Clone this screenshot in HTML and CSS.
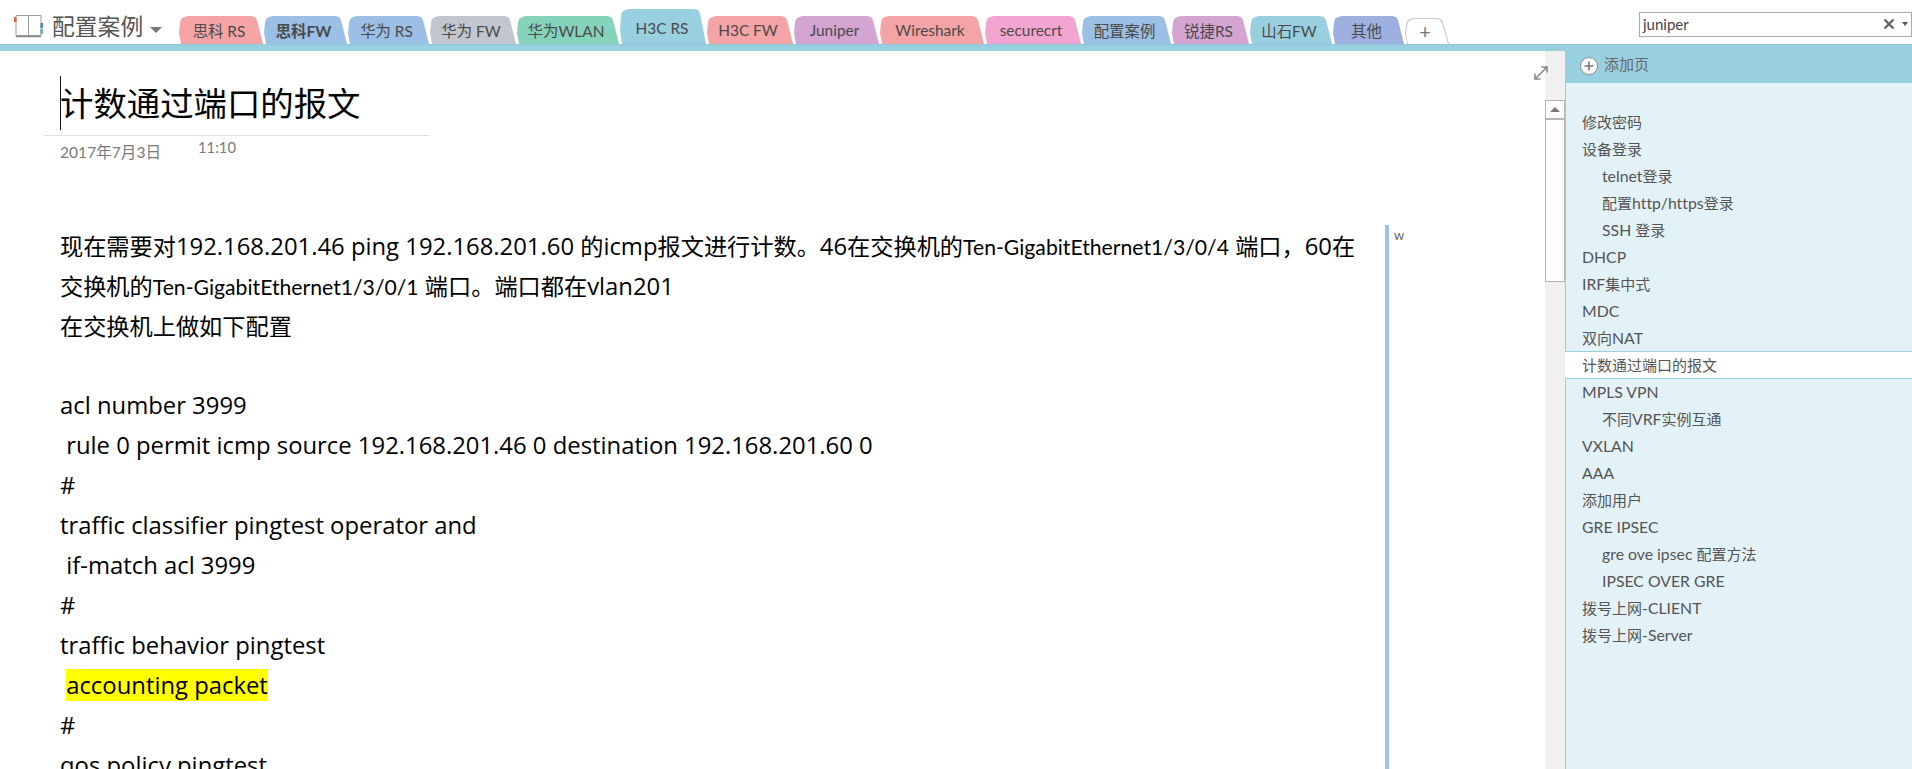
FILE: index.html
```html
<!DOCTYPE html>
<html lang="zh-CN">
<head>
<meta charset="utf-8">
<title>计数通过端口的报文</title>
<link rel="stylesheet" href="styles.css">
</head>
<body>
<header class="topbar">
  <div class="brand">
    <svg class="book" width="30" height="24" viewBox="0 0 30 24">
      <path d="M2 1.5h12.5v20H2zM14.5 1.5H27v20H14.5z" fill="#fff" stroke="#9a9a9a" stroke-width="1"/>
      <path d="M2 22.5h25" stroke="#8a8a8a" stroke-width="1.5"/>
      <rect x="0" y="3" width="2.5" height="5" fill="#e2603a"/>
      <rect x="26.5" y="9" width="2.5" height="5" fill="#4a86c5"/>
      <rect x="26.5" y="15" width="2.5" height="5" fill="#6fae9a"/>
    </svg>
    <span class="brand-name">配置案例</span>
    <span class="brand-caret"></span>
  </div>
  <nav class="tabs">
    <div class="tab c-red w85">思科 RS</div>
    <div class="tab c-blue w84 strong">思科FW</div>
    <div class="tab c-blue w82">华为 RS</div>
    <div class="tab c-grey w87">华为 FW</div>
    <div class="tab c-green w103">华为WLAN</div>
    <div class="tab c-teal w87 active">H3C RS</div>
    <div class="tab c-red w87">H3C FW</div>
    <div class="tab c-purple w86">Juniper</div>
    <div class="tab c-red w105">Wireshark</div>
    <div class="tab c-pink w97">securecrt</div>
    <div class="tab c-blue w90">配置案例</div>
    <div class="tab c-purple w78">锐捷RS</div>
    <div class="tab c-teal w83">山石FW</div>
    <div class="tab c-indigo w72">其他</div>
    <div class="tab add w45"><span class="add-label">+</span></div>
  </nav>
  <div class="search">
    <span class="search-text">juniper</span>
    <svg class="search-x" width="12" height="12" viewBox="0 0 12 12"><path d="M1.5 1.5l9 9M10.5 1.5l-9 9" stroke="#666" stroke-width="2.4"/></svg>
    <span class="search-caret"></span>
  </div>
</header>
<div class="band"></div>
<div class="workspace">
  <main class="page">
    <span class="caret"></span>
    <svg class="expand" width="16" height="16" viewBox="0 0 16 16"><path d="M2.5 13.5L13.5 2.5M8.5 2h5.5v5.5M2 8.5V14h5.5" fill="none" stroke="#858585" stroke-width="1.5"/></svg>
    <div class="title-block">
      <h1 class="title">计数通过端口的报文</h1>
    </div>
    <div class="meta">
      <span class="date">2017年7月3日</span>
      <span class="time">11:10</span>
    </div>
    <div class="note-row">
      <div class="note">
        <div class="line"><span class="c">现在需要对</span>192.168.201.46 ping 192.168.201.60 <span class="c">的</span>icmp<span class="c">报文进行计数。</span>46<span class="c">在交换机的</span><span class="s">Ten-GigabitEthernet1/3/0/4</span> <span class="c">端口，</span>60<span class="c">在</span></div>
        <div class="line"><span class="c">交换机的</span><span class="s">Ten-GigabitEthernet1/3/0/1</span> <span class="c">端口。端口都在</span>vlan201</div>
        <div class="line"><span class="c">在交换机上做如下配置</span></div>
        <div class="line"></div>
        <div class="line">acl number 3999</div>
        <div class="line"> rule 0 permit icmp source 192.168.201.46 0 destination 192.168.201.60 0</div>
        <div class="line">#</div>
        <div class="line">traffic classifier pingtest operator and</div>
        <div class="line"> if-match acl 3999</div>
        <div class="line">#</div>
        <div class="line">traffic behavior pingtest</div>
        <div class="line"> <span class="mark">accounting packet</span></div>
        <div class="line">#</div>
        <div class="line">qos policy pingtest</div>
      </div>
      <aside class="side-note">w</aside>
    </div>
  </main>
  <div class="scrollbar">
    <div class="scroll-btn"><span class="scroll-up"></span></div>
    <div class="scroll-thumb"></div>
  </div>
  <aside class="panel">
    <div class="panel-head">
      <svg class="plus" width="20" height="20" viewBox="0 0 20 20"><circle cx="10" cy="10" r="8.5" fill="#fff" stroke="#8f8f8f" stroke-width="1"/><path d="M10 5.5v9M5.5 10h9" stroke="#777" stroke-width="1.6"/></svg>
      <span>添加页</span>
    </div>
    <ul class="pages">
      <li><span class="c">修改密码</span></li>
      <li><span class="c">设备登录</span></li>
      <li class="sub">telnet<span class="c">登录</span></li>
      <li class="sub"><span class="c">配置</span>http/https<span class="c">登录</span></li>
      <li class="sub">SSH <span class="c">登录</span></li>
      <li>DHCP</li>
      <li>IRF<span class="c">集中式</span></li>
      <li>MDC</li>
      <li><span class="c">双向</span>NAT</li>
      <li class="current"><span class="c">计数通过端口的报文</span></li>
      <li>MPLS VPN</li>
      <li class="sub"><span class="c">不同</span>VRF<span class="c">实例互通</span></li>
      <li>VXLAN</li>
      <li>AAA</li>
      <li><span class="c">添加用户</span></li>
      <li>GRE IPSEC</li>
      <li class="sub">gre ove ipsec <span class="c">配置方法</span></li>
      <li class="sub">IPSEC OVER GRE</li>
      <li><span class="c">拨号上网</span>-CLIENT</li>
      <li><span class="c">拨号上网</span>-Server</li>
    </ul>
  </aside>
</div>
</body>
</html>
```
FILE: styles.css
```css
* { box-sizing: border-box; }
html, body { height: 100%; }
body {
  margin: 0;
  height: 100vh;
  overflow: hidden;
  display: flex;
  flex-direction: column;
  background: #fff;
  font-family: Lato, "Noto Sans CJK SC", sans-serif;
  font-variant-ligatures: none;
  color: #444;
}

/* top bar */
.topbar { flex: none; height: 44px; display: flex; align-items: flex-end; }
.brand { flex: none; width: 179px; height: 44px; display: flex; align-items: flex-start; padding: 14px 0 0 14px; }
.book { flex: none; }
.brand-name { margin: -3px 0 0 8px; font: 22.8px/30px "Noto Sans CJK SC", sans-serif; color: #555; white-space: nowrap; }
.brand-caret { margin: 13px 0 0 7px; width: 0; height: 0; border-left: 6.5px solid transparent; border-right: 6.5px solid transparent; border-top: 6px solid #777; }

.tabs { flex: none; display: flex; align-items: flex-end; height: 44px; }
.tab {
  flex: none;
  height: 28px;
  display: flex;
  align-items: center;
  justify-content: center;
  padding-right: 5px;
  font-size: 15.4px;
  color: #4a4a4a;
  white-space: nowrap;
  clip-path: polygon(2px 100%, 0 60%, 1px 7px, 2px 3px, 5px 1px, 9px 0, calc(100% - 13px) 0, calc(100% - 9px) 1px, calc(100% - 7px) 4px, calc(100% - 1px) 100%);
}
.w85 { width: 85px; } .w84 { width: 84px; } .w82 { width: 82px; } .w87 { width: 87px; }
.w103 { width: 103px; } .w86 { width: 86px; } .w105 { width: 105px; } .w97 { width: 97px; }
.w90 { width: 90px; } .w78 { width: 78px; } .w83 { width: 83px; } .w72 { width: 72px; } .w45 { width: 45px; }
.c-red { background: #f4a4a4; }
.c-blue { background: #9bbfe5; }
.c-grey { background: #c1c6cf; }
.c-green { background: #86d3bc; }
.c-teal { background: #98d0df; }
.c-purple { background: #d4a5d2; }
.c-pink { background: #f3a5d1; }
.c-indigo { background: #9eb0e0; }
.strong { font-weight: 700; }
.tab.active { height: 35px; padding-top: 3px; padding-right: 3px; }
.tab.add { position: relative; height: 26px; background: #c9c9c9; }
.tab.add::before {
  content: "";
  position: absolute;
  inset: 1px 1px 0 1px;
  background: #fff;
  clip-path: inherit;
}
.add-label { position: relative; font-size: 20px; line-height: 20px; color: #777; }

.search {
  flex: none;
  align-self: flex-start;
  margin: 12px 0 0 189px;
  width: 273px;
  height: 25px;
  background: #fff;
  border: 1px solid #aaa;
  display: flex;
  align-items: center;
  padding: 0 3px 2px 3px;
}
.search-text { flex: 1; font-size: 15px; color: #444; }
.search-x { flex: none; margin-right: 7px; }
.search-caret { flex: none; width: 0; height: 0; border-left: 3.5px solid transparent; border-right: 3.5px solid transparent; border-top: 4px solid #555; }

.band { flex: none; height: 7px; background: #98d0df; border-top: 1px solid #8cc8da; }

/* work area */
.workspace { flex: 1; min-height: 0; display: flex; }
.page { position: relative; flex: none; width: 1545px; background: #fff; overflow-y: clip; }
.caret { position: absolute; left: 60px; top: 25px; width: 1px; height: 54px; background: #111; }
.expand { position: absolute; left: 1533px; top: 14px; }
.title-block { margin-left: 44px; width: 385px; height: 85px; padding: 29px 0 0 16px; border-bottom: 1px solid #e0e0e0; }
.title { margin: 0; font: 400 33.4px/44px "Noto Sans CJK SC", sans-serif; color: #000; white-space: nowrap; }
.meta { display: flex; align-items: flex-start; height: 89px; padding-left: 60px; color: #7a7a7a; white-space: nowrap; }
.date { width: 138px; font-size: 15.6px; line-height: 22px; margin-top: 5px; }
.time { font-size: 14.8px; line-height: 22px; }

.note-row { display: flex; }
.note { flex: none; width: 1385px; padding: 0 0 0 60px; font-family: "Open Sans", "Noto Sans CJK SC", sans-serif; font-size: 23.85px; line-height: 40px; color: #000; }
.line { height: 40px; white-space: pre; }
.note .c { font-family: "Noto Sans CJK SC", sans-serif; font-size: 23.2px; }
.s { font-family: Lato, sans-serif; font-size: 21.2px; }
.mark { background: #ff0; }
.side-note { flex: none; height: 600px; width: 60px; border-left: 4px solid #9cc2e6; padding-left: 5px; font-size: 13px; line-height: 20px; color: #666; }

.scrollbar { flex: none; width: 20px; background: #f0f0f0; padding-top: 49px; }
.scroll-btn { height: 19px; background: #fff; border: 1px solid #b4b4b4; display: flex; align-items: center; justify-content: center; }
.scroll-up { width: 0; height: 0; border-left: 5px solid transparent; border-right: 5px solid transparent; border-bottom: 5px solid #777; }
.scroll-thumb { height: 163px; background: #fff; border: 1px solid #b4b4b4; }

/* pages panel */
.panel { flex: 1; min-width: 0; background: #e3f2f7; border-left: 1px solid #98d0df; display: flex; flex-direction: column; }
.panel-head { flex: none; height: 32px; margin-left: -1px; background: #98d0df; display: flex; align-items: center; gap: 5px; padding: 0 0 6px 14px; font: 15px/20px "Noto Sans CJK SC", sans-serif; color: #666; }
.plus { flex: none; margin-top: 4px; }
.pages { list-style: none; margin: 0; padding: 25px 0 0; font-size: 15.8px; color: #555; }
.pages .c { font-size: 15px; }
.pages li { height: 27px; line-height: 27px; padding-left: 16px; white-space: nowrap; }
.pages li.sub { padding-left: 36px; }
.pages li.current { margin-left: -1px; padding-left: 17px; height: 28px; margin-bottom: -1px; background: #fff; border-top: 1px solid #98d0df; border-bottom: 1px solid #98d0df; line-height: 26px; }
```
